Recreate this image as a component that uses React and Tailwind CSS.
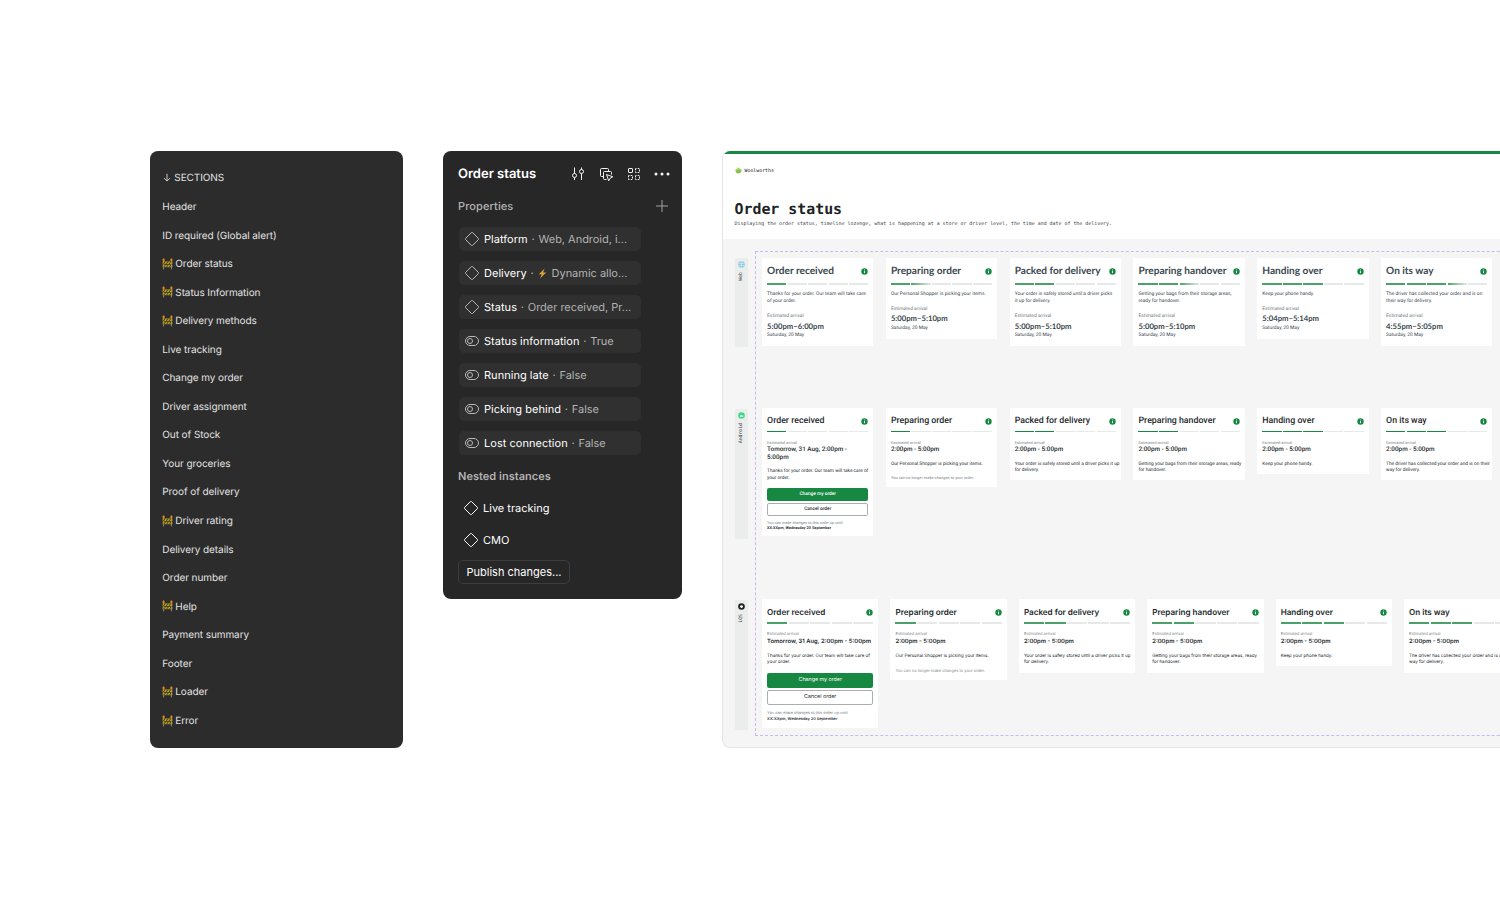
import clsx from "clsx";

/* left nav */
const sections = [
  { label: "Header" },
  { label: "ID required (Global alert)" },
  { label: "Order status", wip: true },
  { label: "Status Information", wip: true },
  { label: "Delivery methods", wip: true },
  { label: "Live tracking" },
  { label: "Change my order" },
  { label: "Driver assignment" },
  { label: "Out of Stock" },
  { label: "Your groceries" },
  { label: "Proof of delivery" },
  { label: "Driver rating", wip: true },
  { label: "Delivery details" },
  { label: "Order number" },
  { label: "Help", wip: true },
  { label: "Payment summary" },
  { label: "Footer" },
  { label: "Loader", wip: true },
  { label: "Error", wip: true },
];

/* component properties */
const properties = [
  { name: "Platform", value: "Web, Android, i...", kind: "variant" },
  { name: "Delivery", value: "Dynamic allo...", kind: "variant", bolt: true },
  { name: "Status", value: "Order received, Pr...", kind: "variant" },
  { name: "Status information", value: "True", kind: "toggle" },
  { name: "Running late", value: "False", kind: "toggle" },
  { name: "Picking behind", value: "False", kind: "toggle" },
  { name: "Lost connection", value: "False", kind: "toggle" },
];

/* canvas cards; fade = the next step is in progress */
const webCards = [
  { title: "Order received", done: 1, body: ["Thanks for your order. Our team will take care", "of your order."], time: "5:00pm–6:00pm" },
  { title: "Preparing order", done: 1, fade: true, body: ["Our Personal Shopper is picking your items."], time: "5:00pm–5:10pm" },
  { title: "Packed for delivery", done: 2, body: ["Your order is safely stored until a driver picks", "it up for delivery."], time: "5:00pm–5:10pm" },
  { title: "Preparing handover", done: 2, fade: true, body: ["Getting your bags from their storage areas,", "ready for handover."], time: "5:00pm–5:10pm" },
  { title: "Handing over", done: 3, body: ["Keep your phone handy."], time: "5:04pm–5:14pm" },
  { title: "On its way", done: 3, fade: true, body: ["The driver has collected your order and is on", "their way for delivery."], time: "4:55pm–5:05pm" },
];

const androidCards = [
  { title: "Order received", done: 1, time: ["Tomorrow, 31 Aug, 2:00pm -", "5:00pm"], body: ["Thanks for your order. Our team will take care of", "your order."], actions: true },
  { title: "Preparing order", done: 1, time: ["2:00pm - 5:00pm"], body: ["Our Personal Shopper is picking your items."], locked: true },
  { title: "Packed for delivery", done: 2, time: ["2:00pm - 5:00pm"], body: ["Your order is safely stored until a driver picks it up", "for delivery."] },
  { title: "Preparing handover", done: 2, time: ["2:00pm - 5:00pm"], body: ["Getting your bags from their storage areas, ready", "for handover."] },
  { title: "Handing over", done: 3, time: ["2:00pm - 5:00pm"], body: ["Keep your phone handy."] },
  { title: "On its way", done: 3, time: ["2:00pm - 5:00pm"], body: ["The driver has collected your order and is on their", "way for delivery."] },
];

const iosCards = androidCards.map((c) =>
  c.actions ? { ...c, time: ["Tomorrow, 31 Aug, 2:00pm - 5:00pm"] } : c
);

function Barrier() {
  return (
    <svg width="11" height="12" viewBox="0 0 11 12" className="mr-0.5 mb-[1.5px] shrink-0">
      <path d="M1.6 3v8.4M9.4 3v8.4" stroke="#8d8a80" strokeWidth="1" />
      <rect x="0.6" y="3.4" width="9.8" height="2.7" fill="#b39a1f" />
      <rect x="0.6" y="6.8" width="9.8" height="2.4" fill="#b39a1f" />
      <path d="M3.2 3.4 1.4 6.1M6 3.4 4.2 6.1M8.8 3.4 7 6.1M3.4 6.8l-1.6 2.4M6.2 6.8 4.6 9.2M9 6.8 7.4 9.2" stroke="#3b3522" strokeWidth="0.9" />
      <rect x="0.6" y="0.6" width="2" height="2.8" rx="0.8" fill="#e58a1f" />
      <rect x="8.4" y="0.6" width="2" height="2.8" rx="0.8" fill="#e58a1f" />
    </svg>
  );
}

function Diamond({ className }) {
  return (
    <svg width="16" height="16" viewBox="0 0 16 16" fill="none" className={clsx("shrink-0", className)}>
      <path d="M7.4 1.6 1.6 7.4a.85.85 0 0 0 0 1.2l5.8 5.8a.85.85 0 0 0 1.2 0l5.8-5.8a.85.85 0 0 0 0-1.2L8.6 1.6a.85.85 0 0 0-1.2 0Z" stroke="currentColor" />
    </svg>
  );
}

function Toggle() {
  return (
    <svg width="16" height="16" viewBox="0 0 16 16" fill="none" className="shrink-0 text-[#b8b8b8]">
      <rect x="1.5" y="3.5" width="13" height="9" rx="4.5" stroke="currentColor" />
      <circle cx="6" cy="8" r="2.5" stroke="currentColor" />
    </svg>
  );
}

function SectionsPanel() {
  return (
    <nav className="h-[597px] w-[253px] shrink-0 rounded-lg bg-[#2c2c2c] pt-[13.7px] pl-[12.3px] text-[10px] tracking-[-0.08px] text-[#e2e2e2]">
      <div className="flex h-[28.55px] items-center">
        <svg width="8" height="9" viewBox="0 0 8 9" fill="none" className="mr-[3.5px] mb-[2px] ml-[0.5px]">
          <path d="M4 .8v7.2M1 5.1l3 3 3-3" stroke="#c8c8c8" />
        </svg>
        SECTIONS
      </div>
      {sections.map((s) => (
        <div key={s.label} className="flex h-[28.55px] items-center whitespace-nowrap">
          {s.wip && <Barrier />}
          {s.label}
        </div>
      ))}
    </nav>
  );
}

function PropertiesPanel() {
  return (
    <section className="h-[448px] w-[239px] shrink-0 rounded-lg bg-[#272727] pl-[15px] text-[11px] text-white">
      <div className="flex h-[46px] items-center pr-3">
        <h2 className="flex-1 pt-[2px] text-[13px] font-semibold">Order status</h2>
        <div className="flex items-center gap-3">
          <svg width="16" height="16" viewBox="0 0 16 16" fill="none" stroke="#f2f2f2">
            <path d="M4.5 1.5v6M4.5 11.5v2.5M11.500 7.500v6.500M11.500 1.500v2" />
            <circle cx="4.5" cy="9.5" r="2" />
            <circle cx="11.5" cy="5.5" r="2" />
          </svg>
          <svg width="16" height="16" viewBox="-1 -1 16 16" fill="none" stroke="#f2f2f2">
            <path d="M4.500 9.500h-2a1 1 0 0 1-1-1v-6a1 1 0 0 1 1-1h6a1 1 0 0 1 1 1v2" />
            <path d="M7.500 12.500h-2a1 1 0 0 1-1-1v-6a1 1 0 0 1 1-1h6a1 1 0 0 1 1 1v2" />
            <path d="m7.500 7.500 2.200 6.300 1.500-2.600L13.800 9.800Z" strokeLinejoin="round" />
          </svg>
          <svg width="16" height="16" viewBox="0 0 16 16" fill="none" stroke="#f2f2f2">
            <rect x="2.5" y="2.5" width="4" height="4" rx=".5" />
            <g strokeDasharray="2 1.2 1.6 1.2" strokeDashoffset="1">
              <rect x="9.5" y="2.5" width="4" height="4" />
              <rect x="2.5" y="9.5" width="4" height="4" />
              <rect x="9.5" y="9.5" width="4" height="4" />
            </g>
          </svg>
          <svg width="16" height="16" viewBox="0 0 16 16" fill="#f5f5f5">
            <circle cx="2" cy="8" r="1.5" />
            <circle cx="8" cy="8" r="1.5" />
            <circle cx="14" cy="8" r="1.5" />
          </svg>
        </div>
      </div>

      <div className="flex h-[18px] items-center justify-between pr-[14px] text-[#b3b3b3]">
        <h3 className="font-medium tracking-[0.1px]">Properties</h3>
        <svg width="12" height="12" viewBox="0 0 12 12" stroke="#a0a0a0">
          <path d="M6 0v12M0 6h12" />
        </svg>
      </div>

      <ul className="mt-3 ml-[1px] flex w-[182px] flex-col gap-2.5">
        {properties.map((p) => (
          <li key={p.name} className="flex h-6 items-center rounded-[5px] bg-[#303030] pl-[5px] whitespace-nowrap">
            {p.kind === "variant" ? <Diamond className="text-[#b8b8b8]" /> : <Toggle />}
            <span className="ml-1 tracking-[0.03px]">{p.name}</span>
            <span className="mx-[3.8px] text-[#b3b3b3]">·</span>
            {p.bolt && (
              <svg width="9" height="11" viewBox="0 0 9 11" className="mr-[5px]">
                <path d="M6.6.4.8 6.2h2.9L2 10.6l6.2-6H5.1L6.6.4Z" fill="#d8a237" />
              </svg>
            )}
            <span className="tracking-[-0.02px] text-[#b3b3b3]">{p.value}</span>
          </li>
        ))}
      </ul>

      <h3 className="mt-3 flex h-[18px] items-center font-semibold tracking-[0.03px] text-[#b3b3b3]">Nested instances</h3>
      <ul className="mt-[7px] ml-[5px]">
        {["Live tracking", "CMO"].map((n) => (
          <li key={n} className="flex h-8 items-center">
            <Diamond />
            <span className="ml-1">{n}</span>
          </li>
        ))}
      </ul>
      <button className="mt-1 h-6 w-[112px] rounded-[5px] border border-[#3d3d3d] whitespace-nowrap">Publish changes...</button>
    </section>
  );
}

function InfoDot() {
  return (
    <svg width="7" height="7" viewBox="0 0 7 7" className="shrink-0">
      <circle cx="3.5" cy="3.5" r="3.2" fill="#178841" />
      <path d="M3.5 3.1v2.1M3.5 1.6v.8" stroke="#fff" strokeWidth=".9" />
    </svg>
  );
}

function Steps({ done, fade, soft }) {
  return (
    <div className="grid grid-cols-5 gap-[1.3px]">
      {[0, 1, 2, 3, 4].map((i) => (
        <div
          key={i}
          className={clsx(
            "h-[1.4px]",
            i < done && (soft ? "bg-[#4aa169]" : "bg-[#178841]"),
            i === done && fade && "bg-gradient-to-r from-[#4aa169] to-[#e6e9e8]",
            i >= done && !(i === done && fade) && "bg-[#e6e9e8]"
          )}
        />
      ))}
    </div>
  );
}

function WebCard({ title, done, fade, body, time }) {
  return (
    <article className="w-[111.3px] shrink-0 bg-white px-[5px] pt-1.5 pb-[7px] whitespace-nowrap text-[#3a474e]">
      <div className="flex h-[14px] items-center justify-between">
        <h4 className="pt-[2px] font-[Lato,sans-serif] text-[10.1px] font-bold">{title}</h4>
        <InfoDot />
      </div>
      <div className="mt-[5.3px]"><Steps done={done} fade={fade} soft /></div>
      <div className="mt-[5.9px] font-[Roboto,sans-serif] text-[4.93px] leading-[7.5px]">
        {body.map((l) => <p key={l}>{l}</p>)}
      </div>
      <p className="mt-[7.5px] font-[Roboto,sans-serif] text-[4.9px] leading-[7px] text-[#6d777c]">Estimated arrival</p>
      <p className="mt-[1.6px] font-[Lato,sans-serif] text-[7.7px] leading-[9px] font-bold">{time}</p>
      <p className="mt-[1.6px] font-[Roboto,sans-serif] text-[4.9px] leading-[7px]">Saturday, 20 May</p>
    </article>
  );
}

function AppCard({ ios, title, done, time, body, actions, locked }) {
  return (
    <article
      className={clsx(
        "shrink-0 bg-white px-[5px] pt-1.5 whitespace-nowrap text-[#23292c]",
        ios ? "w-[116.3px] pb-[6px] font-[Inter,sans-serif]" : "w-[111.3px] pb-[5.7px] font-[Roboto,sans-serif]"
      )}
    >
      <div className="flex h-[14px] items-center justify-between">
        <h4 className={ios ? "text-[8.1px] font-semibold" : "pt-[2px] text-[8.8px] font-medium"}>{title}</h4>
        <InfoDot />
      </div>
      <div className="mt-[3px]"><Steps done={done} soft={ios} /></div>
      <p className="mt-[7.3px] text-[4px] leading-[5px] text-[#7b8386]">Estimated arrival</p>
      <div className={clsx("mt-[1.7px] leading-[7.5px]", ios ? "text-[5.85px] font-semibold" : "text-[6.35px] font-medium")}>
        {time.map((l) => <p key={l}>{l}</p>)}
      </div>
      <div className={clsx("leading-[6.3px]", ios ? "mt-[9px] text-[4.5px]" : "mt-[8.1px] text-[4.75px]")}>
        {body.map((l) => <p key={l}>{l}</p>)}
      </div>
      {actions && (
        <>
          <div className={clsx("flex flex-col", ios ? "mt-[6.2px] gap-[2px] text-[5.3px]" : "mt-[6.2px] gap-[2.3px] text-[4.8px] font-medium")}>
            <div className={clsx("flex items-center justify-center rounded-[2px] bg-[#178841] text-white", ios ? "h-[15px] pt-[2px]" : "h-[12.5px]")}>
              Change my order
            </div>
            <div className={clsx("flex items-center justify-center rounded-[2px] border border-[#a9afb1]", ios ? "h-[15px] pt-[2px]" : "h-[12.5px]")}>
              Cancel order
            </div>
          </div>
          <div className={clsx("text-[3.9px]", ios ? "mt-[5.5px] leading-[5.6px]" : "mt-[4.5px] leading-[5.2px]")}>
            <p className="text-[#7b8386]">You can make changes to this order up until</p>
            <p className="font-semibold">XX:XXpm, Wednesday 20 September</p>
          </div>
        </>
      )}
      {locked && (
        <p className={clsx("text-[4px] leading-[5px] text-[#7b8386]", ios ? "mt-[7.2px] mb-[1.8px]" : "mt-[6.5px] mb-[1.5px]")}>
          You can no longer make changes to your order.
        </p>
      )}
    </article>
  );
}

function RowLabel({ text, className, children }) {
  return (
    <div className={clsx("flex w-[13.6px] shrink-0 flex-col items-center rounded-[1px] bg-[#ebeded] pt-[3px]", className)}>
      {children}
      <span className="mt-1 rotate-180 font-['DejaVu_Sans_Mono',monospace] text-[4.8px] leading-[7px] text-[#3b4245] [writing-mode:vertical-rl]">
        {text}
      </span>
    </div>
  );
}

function Canvas() {
  return (
    <section className="h-[597px] w-[1000px] shrink-0 overflow-hidden rounded-lg border border-t-0 border-[#e4e4e4] bg-[#f5f5f5]">
      <header className="h-[88px] border-t-[3.5px] border-[#178841] bg-white pl-[11.5px] font-['DejaVu_Sans_Mono',monospace] text-[#1c2225]">
        <div className="flex h-[33px] items-center gap-[3px] text-[4.9px]">
          <svg width="7" height="7" viewBox="0 0 7 7">
            <path d="M3.5.5c1 .2 1.3 1 1.2 1.8C5.3 1.9 6.5 2 6.6 3 6.7 5 5.5 6.5 3.5 6.5S.3 5 .4 3c.1-1 1.3-1.1 1.9-.7C2.2 1.5 2.5.7 3.5.5Z" fill="#a6cf5b" />
            <path d="M1 4.3c1.5 1.4 3.5 1.4 5 0M2 3.2c1 .9 2 .9 3 0" stroke="#4b9a3a" strokeWidth=".5" fill="none" />
          </svg>
          <span className="pt-[1.5px]">Woolworths</span>
        </div>
        <h1 className="mt-[13px] text-[14.9px] leading-[18px] font-bold">Order status</h1>
        <p className="mt-[2.5px] text-[4.94px] leading-[7px] whitespace-nowrap text-[#3b4245]">
          Displaying the order status, timeline lozenge, what is happening at a store or driver level, the time and date of the delivery.
        </p>
      </header>

      <div className="flex pt-3 pl-[11.5px]">
        {/* platform labels */}
        <div className="flex flex-col pt-[7px]">
          <RowLabel text="Web" className="h-[89px]">
            <svg width="7" height="7" viewBox="0 0 7 7">
              <circle cx="3.5" cy="3.5" r="3.2" fill="#8ecbe6" />
              <path d="M1 2.5h5M1 4.5h5M3.5.5v6" stroke="#d8eef7" strokeWidth=".6" />
            </svg>
          </RowLabel>
          <RowLabel text="Android" className="mt-[62px] h-[129.5px]">
            <svg width="7" height="7" viewBox="0 0 7 7">
              <circle cx="3.5" cy="3.5" r="3.3" fill="#3ddc84" />
              <path d="M1.7 4.7a1.8 1.8 0 0 1 3.6 0Z" fill="#fff" />
            </svg>
          </RowLabel>
          <RowLabel text="iOS" className="mt-[61.5px] h-[130px]">
            <svg width="7" height="7" viewBox="0 0 7 7">
              <circle cx="3.5" cy="3.5" r="3.3" fill="#1c2225" />
              <circle cx="3.5" cy="3.6" r="1.4" fill="#fff" />
            </svg>
          </RowLabel>
        </div>

        {/* variants frame */}
        <div className="ml-[7px] h-[485px] w-[900px] shrink-0 border border-dashed border-[#cbb8f2] pt-1.5 pl-1.5">
          <div className="flex h-[150px] items-start gap-[12.5px]">
            {webCards.map((c) => <WebCard key={c.title} {...c} />)}
          </div>
          <div className="flex h-[191.3px] items-start gap-[12.5px]">
            {androidCards.map((c) => <AppCard key={c.title} {...c} />)}
          </div>
          <div className="flex items-start gap-[12.1px]">
            {iosCards.map((c) => <AppCard key={c.title} ios {...c} />)}
          </div>
        </div>
      </div>
    </section>
  );
}

export default function App() {
  return (
    <main className="flex h-[900px] w-[1500px] items-start gap-10 overflow-hidden bg-white pt-[151px] pl-[150px] font-[Inter,sans-serif] [text-rendering:geometricPrecision]">
      <SectionsPanel />
      <PropertiesPanel />
      <Canvas />
    </main>
  );
}
